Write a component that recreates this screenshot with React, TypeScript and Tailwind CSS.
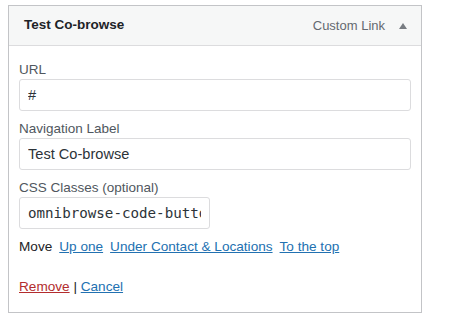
const FONT = { fontFamily: '"Liberation Sans", Arial, sans-serif' };

function Field({
  label,
  value,
  mono,
  narrow,
}: {
  label: string;
  value: string;
  mono?: boolean;
  narrow?: boolean;
}) {
  return (
    <div className="flex flex-col">
      <label className="text-[13.5px] leading-[16px] text-[#50575e]">{label}</label>
      <input
        readOnly
        value={value}
        className={`mt-px h-[32px] rounded-[3px] border border-[#dcdcde] bg-white px-[8px] text-[#2c3338] outline-none ${
          narrow ? "w-[191px]" : "w-full"
        } ${mono ? "font-['DejaVu_Sans_Mono',monospace] text-[14.2px]" : "text-[14.6px]"}`}
      />
    </div>
  );
}

export default function App() {
  return (
    <div className="h-[332px] w-[461px] bg-white pl-[8px] pt-[5px]" style={FONT}>
      <div className="w-[414px] border border-[#c3c4c7] bg-white">
        {/* item header */}
        <div className="flex h-[40px] items-center justify-between border-b border-[#dcdcde] bg-[#f6f7f7] pl-[15px] pr-[14px]">
          <span className="text-[13.5px] font-bold text-[#1d2327]">Test Co-browse</span>
          <div className="flex items-center gap-[14px]">
            <span className="text-[13px] text-[#646970]">Custom Link</span>
            <svg width="8" height="6" viewBox="0 0 8 6">
              <path d="M4 0 L8 6 L0 6 Z" fill="#787c82" />
            </svg>
          </div>
        </div>

        {/* settings */}
        <div className="flex flex-col px-[10px] pb-[15px] pt-[16px]">
          <div className="flex flex-col gap-[10px]">
            <Field label="URL" value="#" />
            <Field label="Navigation Label" value="Test Co-browse" />
            <Field label="CSS Classes (optional)" value="omnibrowse-code-button" mono narrow />
          </div>

          <div className="mt-[8px] flex items-center gap-[7px] text-[13.6px] leading-[20px]">
            <span className="text-[#1d2327]">Move</span>
            <a href="#" className="text-[#2271b1] underline">Up one</a>
            <a href="#" className="text-[#2271b1] underline">Under Contact &amp; Locations</a>
            <a href="#" className="text-[#2271b1] underline">To the top</a>
          </div>

          <div className="mt-[20px] text-[13.6px] leading-[20px] text-[#1d2327]">
            <a href="#" className="text-[#b32d2e] underline">Remove</a>
            <span> | </span>
            <a href="#" className="text-[#2271b1] underline">Cancel</a>
          </div>
        </div>
      </div>
    </div>
  );
}
